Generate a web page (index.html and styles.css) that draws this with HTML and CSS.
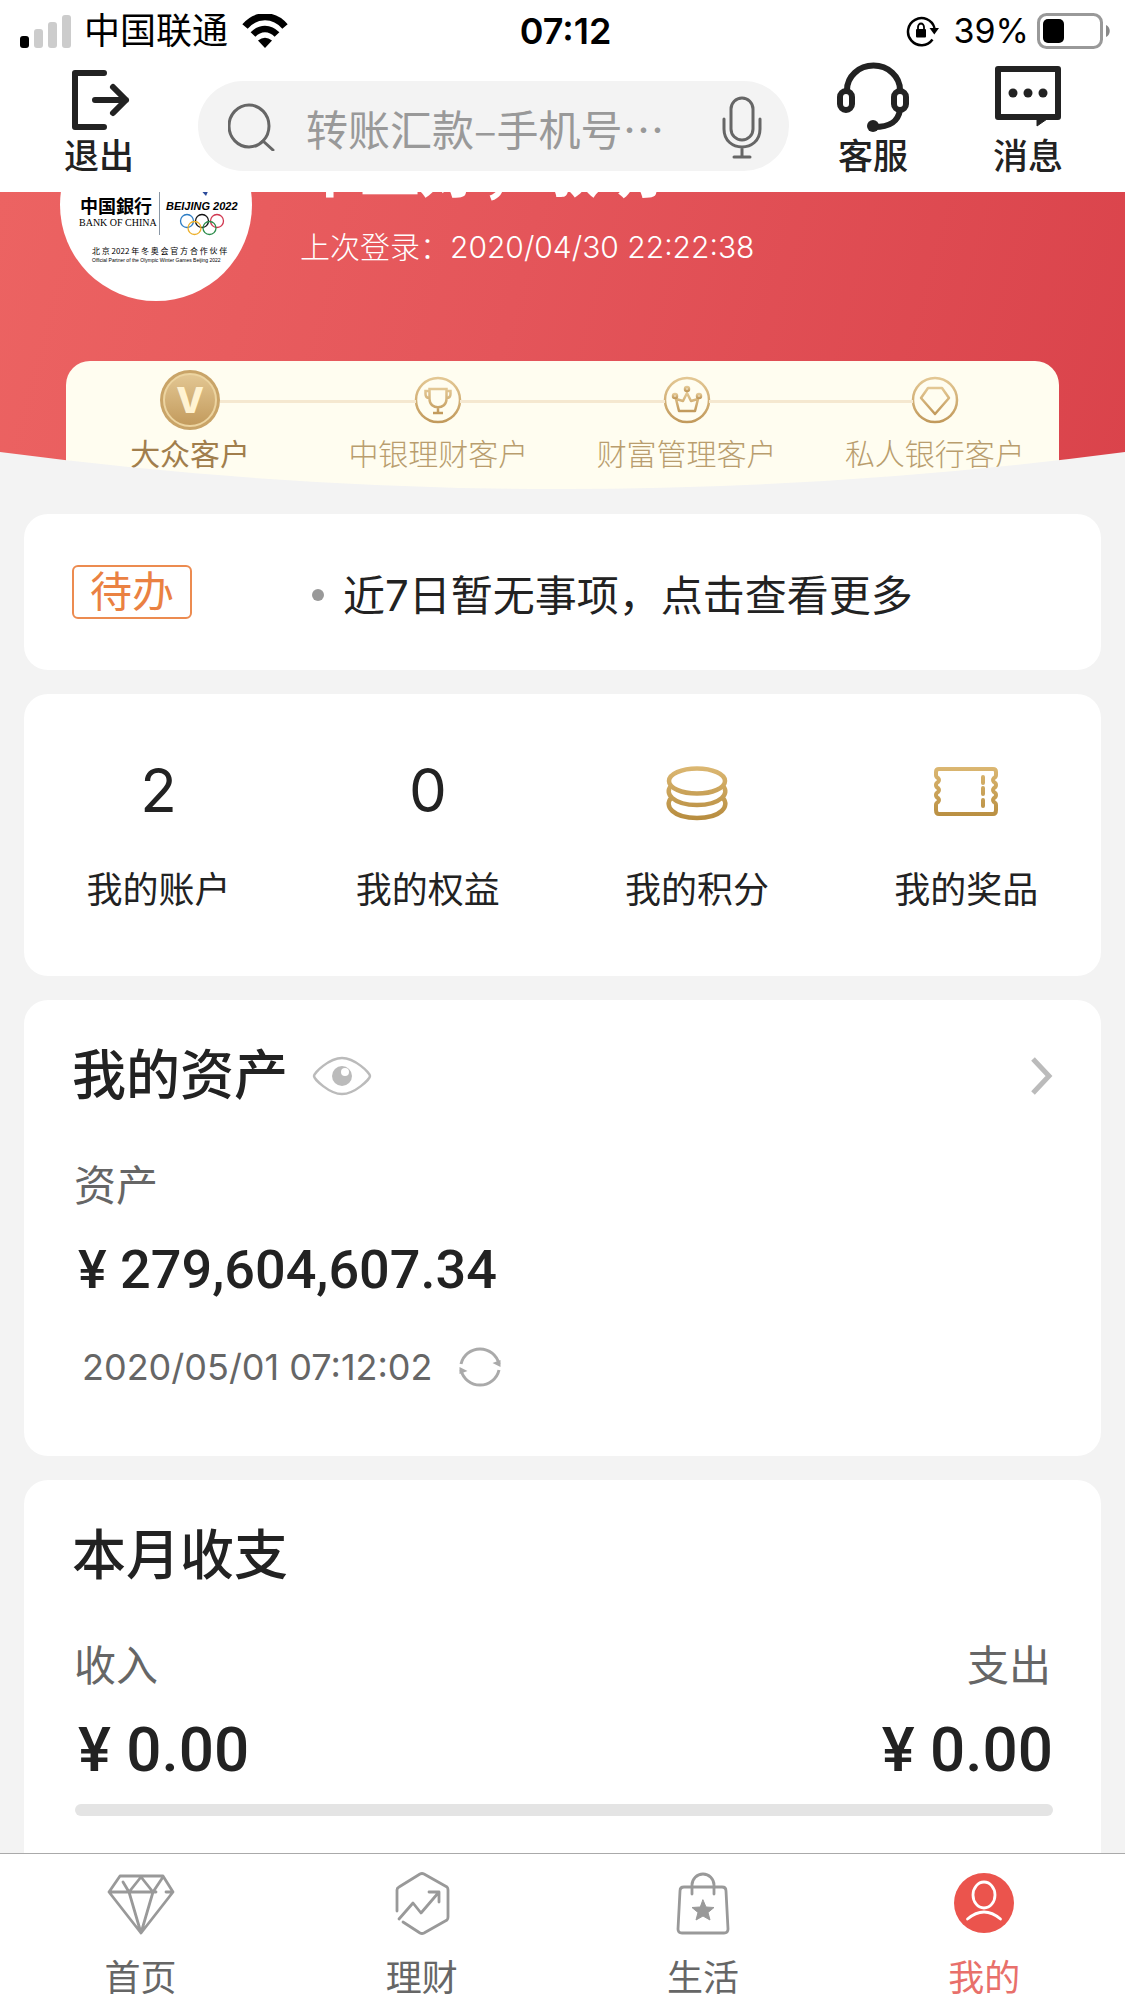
FILE: index.html
```html
<!DOCTYPE html>
<html lang="zh-CN">
<head>
  <meta charset="UTF-8" />
  <meta name="viewport" content="width=device-width, initial-scale=1.0" />
  <title>中国银行 - 我的</title>
  <link rel="stylesheet" href="styles.css">
</head>
<body>
  <div class="status-bar">
    <div class="status-left">
      <svg class="signal" width="52" height="34" viewBox="0 0 52 34">
        <rect x="0" y="22" width="9" height="12" rx="3" fill="#000"/>
        <rect x="14" y="15" width="9" height="19" rx="3" fill="#ccc"/>
        <rect x="28" y="8" width="9" height="26" rx="3" fill="#ccc"/>
        <rect x="42" y="1" width="9" height="33" rx="3" fill="#ccc"/>
      </svg>
      <span class="carrier">中国联通</span>
      <svg width="46" height="34" viewBox="0 0 46 34" fill="none" stroke="#000">
        <path d="M3 12.500C14-.5 32-.5 43 12.500" stroke-width="7"/>
        <path d="M11 20.500C18 13 28 13 35 20.500" stroke-width="6.500"/>
        <path d="M16 26.500Q23 21 30 26.500L23 34z" fill="#000" stroke="none"/>
      </svg>
    </div>
    <time class="clock">07:12</time>
    <div class="status-right">
      <svg class="lock" width="34" height="32" viewBox="0 0 34 32">
        <path d="M26.500 24.500A13.500 13.500 0 1 1 28.500 13" fill="none" stroke="#000" stroke-width="2.500"/>
        <path d="M23.500 13h9.500l-4.700 6.500z"/>
        <rect x="10" y="14" width="10" height="8.500" rx="1"/>
        <path d="M12 15v-3a3 3.500 0 0 1 6 0v3" fill="none" stroke="#000" stroke-width="1.800"/>
      </svg>
      <span class="percent">39%</span>
      <svg width="74" height="36" viewBox="0 0 74 36">
        <rect x="1.500" y="1.500" width="63" height="33" rx="8" fill="none" stroke="#999" stroke-width="3"/>
        <rect x="6" y="6" width="21" height="24" rx="5"/>
        <path d="M69 12c5 2 5 10 0 12z" fill="#888"/>
      </svg>
    </div>
  </div>

  <header>
    <button class="head-btn exit" type="button">
      <svg width="72" height="72" viewBox="0 0 72 72" fill="none" stroke="#222" stroke-width="6" stroke-linecap="round" stroke-linejoin="round">
        <path d="M41 11H12v54h29M32 38h31M50 25l13 13-13 13"/>
      </svg>
      <span>退出</span>
    </button>
    <div class="search">
      <svg width="48" height="48" viewBox="0 0 48 48" fill="none" stroke="#666" stroke-width="3" stroke-linecap="round">
        <ellipse cx="21" cy="23" rx="20" ry="21"/>
        <path d="M35 38l10 9"/>
      </svg>
      <input type="text" aria-label="搜索" placeholder="转账汇款–手机号…">
      <button class="mic" type="button" aria-label="语音搜索">
        <svg width="42" height="64" viewBox="0 0 42 64" fill="none" stroke="#666" stroke-width="3" stroke-linecap="round">
          <rect x="10" y="3" width="22" height="42" rx="11"/>
          <path d="M3 24v10c0 24 36 24 36 0V24M21 53v9M13 62h16"/>
        </svg>
      </button>
    </div>
    <button class="head-btn service" type="button">
      <svg width="72" height="72" viewBox="0 0 72 72" fill="none" stroke="#222" stroke-width="6">
        <path d="M10 28a26.500 24.500 0 0 1 53 0"/>
        <rect x="3" y="29" width="12" height="19" rx="6"/>
        <rect x="57" y="29" width="12" height="19" rx="6"/>
        <path d="M63 48c-2 12-10 17-26 17"/>
        <circle cx="36" cy="64" r="6" fill="#222" stroke="none"/>
      </svg>
      <span>客服</span>
    </button>
    <button class="head-btn message" type="button">
      <svg width="72" height="72" viewBox="0 0 72 72" fill="none" stroke="#222" stroke-width="6" stroke-linejoin="round">
        <path d="M6 7h60v48H6z"/>
        <path d="M45 55v9l13-9z" fill="#222" stroke-width="1"/>
        <g fill="#222" stroke="none"><circle cx="21" cy="31" r="4.500"/><circle cx="36" cy="31" r="4.500"/><circle cx="51" cy="31" r="4.500"/></g>
      </svg>
      <span>消息</span>
    </button>
  </header>

  <main>
    <section class="hero">
      <div class="profile">
        <svg class="avatar" width="192" height="192" viewBox="0 0 192 192">
          <circle cx="96" cy="96" r="96" fill="#fff"/>
          <text class="logo-cn" x="20" y="104">中国銀行</text>
          <text class="logo-en" x="19" y="117">BANK OF CHINA</text>
          <path d="M99.500 60v66" stroke="#8a97a5"/>
          <path d="M138 78h12l-4 9z" fill="#2c4b9b"/>
          <text class="logo-games" x="106" y="101">BEIJING 2022</text>
          <g fill="none" stroke-width="1.300">
            <circle cx="127" cy="112" r="6.500" stroke="#2b7cc4"/>
            <circle cx="142" cy="112" r="6.500" stroke="#111"/>
            <circle cx="157" cy="112" r="6.500" stroke="#d0364f"/>
            <circle cx="134.500" cy="119" r="6.500" stroke="#edb02c"/>
            <circle cx="149.500" cy="119" r="6.500" stroke="#2c8c4b"/>
          </g>
          <text class="logo-small" x="32" y="145">北 京 2022 年 冬 奥 会 官 方 合 作 伙 伴</text>
          <text class="logo-tiny" x="32" y="153">Official Partner of the Olympic Winter Games Beijing 2022</text>
        </svg>
        <div class="greeting">
          <h1>早上好，敏明</h1>
          <p>上次登录：2020/04/30 22:22:38</p>
        </div>
      </div>

      <svg class="defs" width="0" height="0">
        <linearGradient id="gold" x1="0" y1="0" x2="0" y2="1">
          <stop offset="0" stop-color="#e3c793"/>
          <stop offset="1" stop-color="#c29a5c"/>
        </linearGradient>
        <linearGradient id="goldDark" gradientUnits="userSpaceOnUse" x1="0" y1="0" x2="0" y2="56">
          <stop offset="0" stop-color="#dcb873"/>
          <stop offset="1" stop-color="#b58a3c"/>
        </linearGradient>
      </svg>

      <ul class="levels">
        <li class="current">
          <svg width="60" height="60" viewBox="0 0 60 60">
            <circle cx="30" cy="30" r="30" fill="#c9a468"/>
            <circle cx="30" cy="30" r="26" fill="url(#gold)" stroke="#ecd4a0" stroke-width="2"/>
            <text class="coin-v" x="30" y="43" text-anchor="middle">V</text>
          </svg>
          <span>大众客户</span>
        </li>
        <li>
          <svg width="60" height="60" viewBox="0 0 60 60" fill="none" stroke="url(#gold)" stroke-width="2.500">
            <circle cx="30" cy="30" r="22" fill="#fffdf0"/>
            <path d="M21.500 19h17v10c0 11-17 11-17 0zM21.500 21h-4v3c0 3 2 4 4 4M38.500 21h4v3c0 3-2 4-4 4M30 37v5M25 43h10"/>
          </svg>
          <span>中银理财客户</span>
        </li>
        <li>
          <svg width="60" height="60" viewBox="0 0 60 60" fill="none" stroke="url(#gold)" stroke-width="2.500" stroke-linejoin="round">
            <circle cx="30" cy="30" r="22" fill="#fffdf0"/>
            <path d="M22 41l-3-12 7 2 4-8 4 8 7-2-3 12z"/>
            <circle cx="18" cy="26" r="2"/>
            <circle cx="30" cy="19" r="2"/>
            <circle cx="42" cy="26" r="2"/>
          </svg>
          <span>财富管理客户</span>
        </li>
        <li>
          <svg width="60" height="60" viewBox="0 0 60 60" fill="none" stroke="url(#gold)" stroke-width="2.500" stroke-linejoin="round">
            <circle cx="30" cy="30" r="22" fill="#fffdf0"/>
            <path d="M23 18h14l7 10-14 16-14-16z"/>
          </svg>
          <span>私人银行客户</span>
        </li>
      </ul>
      <svg class="curve" viewBox="0 0 1125 38" preserveAspectRatio="none"><path d="M0 0Q562 74 1125 0V38H0z" fill="#f3f3f3"/></svg>
    </section>

    <section class="card todo">
      <span class="tag">待办</span>
      <a href="#">近7日暂无事项，点击查看更多</a>
    </section>

    <section class="card stats">
      <a href="#"><b>2</b><span>我的账户</span></a>
      <a href="#"><b>0</b><span>我的权益</span></a>
      <a href="#">
        <svg width="72" height="72" viewBox="0 0 72 72" fill="none">
          <g transform="translate(5 12)" stroke="url(#goldDark)" stroke-width="4.500">
            <ellipse cx="31" cy="15" rx="28" ry="12.500"/>
            <path d="M5 20c-7 7 2 19 26 19s33-12 26-19M5 32c-7 8 2 20 26 20s33-12 26-20"/>
          </g>
        </svg>
        <span>我的积分</span>
      </a>
      <a href="#">
        <svg width="72" height="72" viewBox="0 0 72 72" fill="none">
          <g transform="translate(3 12)" stroke="url(#goldDark)" stroke-width="4" stroke-linejoin="round">
            <path d="M6 3h54q3 0 3 3v3q0 2-2 3-2 2 0 4 2 1 2 3t-2 3q-2 2 0 4 2 1 2 3t-2 3q-2 2 0 4 2 1 2 3v5q0 4-3 4H6q-3 0-3-4v-5q0-2 2-3 2-2 0-4-2-1-2-3t2-3q2-2 0-4-2-1-2-3t2-3q2-2 0-4-2-1-2-3V6q0-3 3-3z"/>
            <path d="M50 11v6M50 22v6M50 34v6" stroke-linecap="round"/>
          </g>
        </svg>
        <span>我的奖品</span>
      </a>
    </section>

    <section class="card assets">
      <div class="card-head">
        <h2>我的资产</h2>
        <button class="eye" type="button" aria-label="显示或隐藏金额">
          <svg width="60" height="40" viewBox="0 0 60 40">
            <path d="M2 20C2 17 17 2 30 2s28 15 28 18S43 38 30 38 2 23 2 20z" fill="none" stroke="#bbb" stroke-width="2.500" stroke-linejoin="round"/>
            <circle cx="30" cy="20" r="10" fill="#bbb"/>
            <circle cx="33" cy="16" r="4" fill="#fff"/>
          </svg>
        </button>
        <a class="more" href="#" aria-label="查看资产">
          <svg width="22" height="38" viewBox="0 0 22 38" fill="none" stroke="#bbb" stroke-width="5"><path d="M2 2l16 17L2 36"/></svg>
        </a>
      </div>
      <p class="label">资产</p>
      <p class="amount">¥ 279,604,607.34</p>
      <div class="updated">
        <time>2020/05/01 07:12:02</time>
        <button type="button" aria-label="刷新">
          <svg width="42" height="42" viewBox="0 0 42 42">
            <path d="M2 18A19.500 19.500 0 0 1 40 18M40 24A19.500 19.500 0 0 1 2 24" fill="none" stroke="#aaa" stroke-width="3"/>
            <path d="M41.500 14v7l-8-4zM.5 28v-7l8 4z" fill="#aaa"/>
          </svg>
        </button>
      </div>
    </section>

    <section class="card month">
      <div class="card-head"><h2>本月收支</h2></div>
      <div class="flow">
        <div>
          <p class="label">收入</p>
          <p class="amount large">¥ 0.00</p>
        </div>
        <div class="out">
          <p class="label">支出</p>
          <p class="amount large">¥ 0.00</p>
        </div>
      </div>
      <div class="bar"></div>
    </section>
  </main>

  <nav>
    <a href="#">
      <svg width="72" height="68" viewBox="0 0 72 68" fill="none" stroke="#999" stroke-width="2.800" stroke-linecap="round" stroke-linejoin="round">
        <path d="M15 6h43l10 16-32 41L4 22zM4 22h47M61 22h7M18 12l6 10L36 7l12 15L58 7M24 22l12 41 12-41"/>
      </svg>
      <span>首页</span>
    </a>
    <a href="#">
      <svg width="72" height="68" viewBox="0 0 72 68" fill="none" stroke="#999" stroke-width="2.800" stroke-linecap="round" stroke-linejoin="round">
        <path d="M11 41V20q0-2 2-3L34 4q2-1 4 0l23 13q1 1 1 3v27q0 2-1 3L38 63q-2 1-4 0L17 52"/>
        <path d="M13 49l14-16 8 10 18-21M43 22h10v10"/>
      </svg>
      <span>理财</span>
    </a>
    <a href="#">
      <svg width="72" height="68" viewBox="0 0 72 68" fill="none" stroke="#999" stroke-width="2.800" stroke-linecap="round" stroke-linejoin="round">
        <path d="M17 17h38q4 0 4 4l2 38q0 4-4 4H15q-4 0-4-4l2-38q0-4 4-4z"/>
        <path d="M25 24V15a11 11 0 0 1 22 0v9"/>
        <path d="M36 30l3 7 8 .5-6 5 2 7.500-7-4-7 4 2-7.500-6-5 8-.5z" fill="#999" stroke-width="1"/>
      </svg>
      <span>生活</span>
    </a>
    <a href="#" class="active">
      <svg width="72" height="68" viewBox="0 0 72 68" fill="none" stroke="#fff" stroke-width="2.800" stroke-linecap="round">
        <circle cx="36" cy="33" r="30" fill="#eb544d" stroke="none"/>
        <ellipse cx="36" cy="25" rx="11" ry="13"/>
        <path d="M19.500 49q16.500-14 33 0"/>
      </svg>
      <span>我的</span>
    </a>
  </nav>
</body>
</html>
```
FILE: styles.css
```css
* {
  margin: 0;
  padding: 0;
  box-sizing: border-box;
}

body {
  height: 100vh;
  display: flex;
  flex-direction: column;
  background: #f3f3f3;
  color: #222;
  font-family: Inter, "Noto Sans CJK SC", sans-serif;
}

button {
  border: none;
  background: none;
  color: inherit;
  font: inherit;
  cursor: pointer;
}

a {
  color: inherit;
  text-decoration: none;
}

svg {
  display: block;
  flex-shrink: 0;
}

/* status bar */
.status-bar {
  display: flex;
  align-items: center;
  height: 62px;
  padding: 0 14px 0 20px;
  background: #fff;
  color: #000;
  font-size: 34px;
  line-height: 44px;
}

.status-left,
.status-right {
  display: flex;
  flex: 1;
  align-items: center;
}

.status-right {
  justify-content: flex-end;
}

.carrier {
  margin: 0 14px 0 12px;
  font-size: 36px;
}

.clock {
  font-size: 36px;
  font-weight: 600;
}

.percent {
  margin: 0 8px 0 14px;
}

/* header */
header {
  display: flex;
  height: 130px;
  padding-right: 26px;
  background: #fff;
}

.head-btn {
  display: flex;
  flex-direction: column;
  align-items: center;
  font-size: 35px;
  font-weight: 500;
  line-height: 44px;
}

.exit {
  width: 198px;
}

.service {
  width: 168px;
}

.message {
  width: 142px;
}

.search {
  display: flex;
  flex: 1;
  align-items: center;
  min-width: 0;
  height: 90px;
  margin-top: 19px;
  padding: 2px 26px 0 30px;
  border-radius: 45px;
  background: #f3f3f3;
}

.search input {
  flex: 1;
  min-width: 0;
  margin: 0 20px 0 30px;
  border: none;
  outline: none;
  background: none;
  color: #222;
  font-family: "Noto Sans CJK SC", sans-serif;
  font-size: 42px;
}

.search input::placeholder {
  color: #999;
}

/* content */
main {
  flex: 1;
  min-height: 0;
  overflow-y: auto;
  scrollbar-width: none;
}

.hero {
  position: relative;
  overflow: hidden;
  background: linear-gradient(105deg, #ec6362, #e4555a 45%, #da434b);
}

/* the profile row starts above the visible part of the hero */
.profile {
  display: flex;
  gap: 48px;
  margin-top: -83px;
  padding-left: 60px;
  color: #fff;
}

.greeting h1 {
  margin-top: 25px;
  font-size: 60px;
  line-height: 72px;
}

.greeting p {
  margin-top: 19px;
  font-size: 30px;
  font-weight: 300;
  line-height: 44px;
}

.logo-cn {
  font: bold 18px "Noto Sans CJK SC", sans-serif;
}

.logo-en {
  font: 10px "Liberation Serif", serif;
}

.logo-games {
  font: italic bold 11px "Liberation Sans", sans-serif;
}

.logo-small {
  font: 8px "Noto Sans CJK SC", sans-serif;
}

.logo-tiny {
  font: 5px "Liberation Sans", sans-serif;
}

.defs {
  position: absolute;
}

.levels {
  display: grid;
  grid-template-columns: repeat(4, 1fr);
  height: 129px;
  margin: 60px 66px 0;
  padding-top: 9px;
  border-radius: 24px 24px 0 0;
  background: #fffdf0;
  list-style: none;
}

.levels li {
  position: relative;
  display: flex;
  flex-direction: column;
  align-items: center;
  color: #b99d6e;
  font-size: 30px;
  font-weight: 300;
  line-height: 48px;
}

/* line back to the previous level, between the round icons */
.levels li + li::before {
  content: "";
  position: absolute;
  top: 30px;
  right: calc(50% + 22px);
  width: calc(100% - 44px);
  height: 3px;
  background: #f5e8d0;
}

.levels .current + li::before {
  width: calc(100% - 52px);
}

.levels .current {
  color: #a17e4c;
  font-weight: 400;
}

.coin-v {
  fill: #fff3d2;
  font: 800 36px Inter, sans-serif;
}

.curve {
  position: absolute;
  bottom: 0;
  left: 0;
  width: 100%;
  height: 38px;
}

.card {
  margin: 24px 24px 0;
  border-radius: 24px;
  background: #fff;
}

.todo {
  display: flex;
  align-items: center;
  height: 156px;
  padding: 0 48px;
  font-size: 42px;
}

.tag {
  width: 120px;
  border: 2px solid #ec8b50;
  border-radius: 6px;
  color: #ea8142;
  line-height: 50px;
  text-align: center;
}

.todo a {
  display: flex;
  align-items: center;
  margin-left: 120px;
}

.todo a::before {
  content: "";
  width: 12px;
  height: 12px;
  margin: 6px 19px 0 0;
  border-radius: 50%;
  background: #999;
}

.stats {
  display: grid;
  grid-template-columns: repeat(4, 1fr);
  padding: 60px 0 58px;
}

.stats a {
  display: flex;
  flex-direction: column;
  align-items: center;
  gap: 36px;
  font-size: 36px;
  line-height: 56px;
}

.stats b {
  font-size: 60px;
  font-weight: 400;
  line-height: 72px;
}

.assets,
.month {
  padding: 40px 48px 64px;
}

.card-head {
  display: flex;
  align-items: center;
}

.card-head h2 {
  font-size: 54px;
  font-weight: 500;
  line-height: 72px;
}

.eye {
  margin-left: 24px;
}

.more {
  margin-left: auto;
}

.label {
  margin-top: 44px;
  padding: 0 2px;
  color: #666;
  font-size: 42px;
  line-height: 60px;
}

.amount {
  margin-top: 18px;
  padding-left: 6px;
  font-family: Roboto, sans-serif;
  font-size: 54px;
  font-weight: 500;
  line-height: 72px;
}

.updated {
  display: flex;
  align-items: center;
  gap: 26px;
  margin-top: 36px;
  padding-left: 10px;
  color: #666;
  font-size: 36px;
  line-height: 50px;
}

.flow {
  display: flex;
  justify-content: space-between;
}

.flow .out {
  text-align: right;
}

.amount.large {
  font-size: 62px;
}

.bar {
  height: 12px;
  margin: 18px 0 0 3px;
  border-radius: 6px;
  background: #e4e4e4;
}

/* bottom tabs */
nav {
  display: grid;
  grid-template-columns: repeat(4, 1fr);
  height: 148px;
  padding-top: 16px;
  border-top: 1px solid #aaa;
  background: #fff;
}

nav a {
  display: flex;
  flex-direction: column;
  align-items: center;
  gap: 14px;
  color: #666;
  font-size: 36px;
  line-height: 52px;
}

nav .active {
  color: #e8706b;
}
```
